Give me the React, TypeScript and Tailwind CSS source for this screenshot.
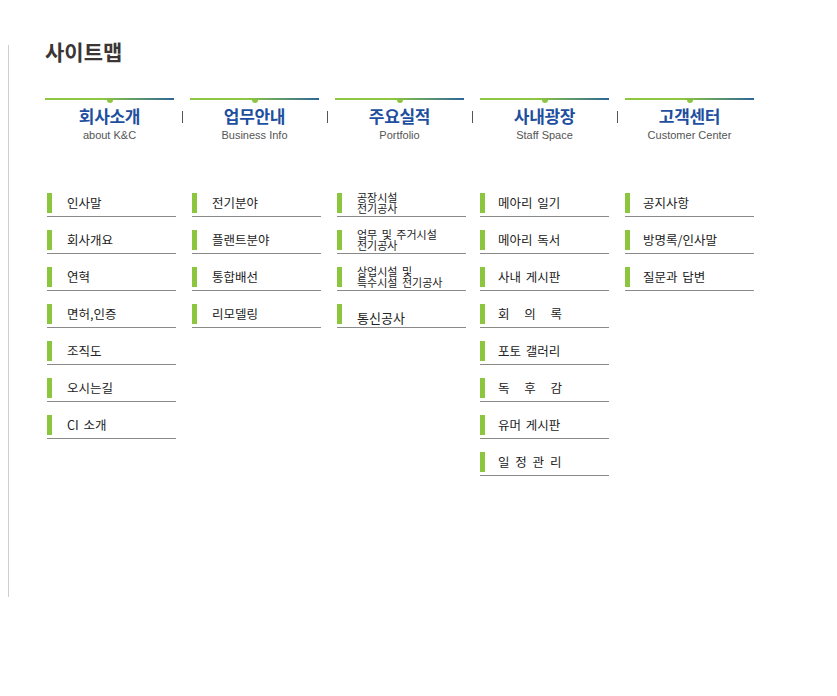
type Item = { label: string; small?: boolean; big?: boolean; spread?: string };

type Section = {
  title: string;
  sub: string;
  shift: boolean; // list sits 2px right of the header bar
  items: Item[];
};

const sections: Section[] = [
  {
    title: "회사소개",
    sub: "about K&C",
    shift: true,
    items: [
      { label: "인사말" },
      { label: "회사개요" },
      { label: "연혁" },
      { label: "면허,인증" },
      { label: "조직도" },
      { label: "오시는길" },
      { label: "CI 소개" },
    ],
  },
  {
    title: "업무안내",
    sub: "Business Info",
    shift: true,
    items: [{ label: "전기분야" }, { label: "플랜트분야" }, { label: "통합배선" }, { label: "리모델링" }],
  },
  {
    title: "주요실적",
    sub: "Portfolio",
    shift: true,
    items: [
      { label: "공장시설\n전기공사", small: true },
      { label: "업무 및 주거시설\n전기공사", small: true },
      { label: "상업시설 및\n특수시설 전기공사", small: true },
      { label: "통신공사", big: true },
    ],
  },
  {
    title: "사내광장",
    sub: "Staff Space",
    shift: false,
    items: [
      { label: "메아리 일기" },
      { label: "메아리 독서" },
      { label: "사내 게시판" },
      { label: "회 의 록", spread: "wide" },
      { label: "포토 갤러리" },
      { label: "독 후 감", spread: "wide" },
      { label: "유머 게시판" },
      { label: "일 정 관 리", spread: "mid" },
    ],
  },
  {
    title: "고객센터",
    sub: "Customer Center",
    shift: false,
    items: [{ label: "공지사항" }, { label: "방명록/인사말" }, { label: "질문과 답변" }],
  },
];

const kr = { fontFamily: '"Noto Sans CJK KR", "Liberation Sans", sans-serif' };

function Header({ s }: { s: Section }) {
  return (
    <div className="w-[129px] flex flex-col items-center">
      <div className="w-full h-[2px] bg-[linear-gradient(to_right,#8dc63f_0%,#8dc63f_45%,#2c6699_100%)]" />
      <div className="w-[6px] h-[3px] rounded-b-full bg-[#8dc63f]" />
      <div className="mt-[2px] text-[17px] leading-[22px] font-bold text-[#1d4f9e] tracking-[-0.3px]" style={kr}>
        {s.title}
      </div>
      <div className="mt-[1px] text-[11px] leading-[14px] text-[#555]" style={{ fontFamily: '"Liberation Sans", Arial, sans-serif' }}>
        {s.sub}
      </div>
    </div>
  );
}

function Row({ item, gap }: { item: Item; gap: string }) {
  const base = "text-[12.5px] leading-[16px] text-[#222] whitespace-pre";
  let textCls = `${base} [word-spacing:2px]`;
  if (item.small) textCls = "text-[11px] leading-[11px] text-[#222] whitespace-pre [word-spacing:2px]";
  if (item.big) textCls = "text-[13px] leading-[16px] text-[#222] whitespace-pre mt-[8px]";
  if (item.spread === "wide") textCls = `${base} [word-spacing:12px]`;
  if (item.spread === "mid") textCls = `${base} [word-spacing:3px]`;

  return (
    <li className="mt-[13px] pb-[3px] border-b border-[#8a8a8a]">
      <div className="h-[20px] flex items-center">
        <span className="w-[5px] h-[20px] bg-[#8cc63f] shrink-0" />
        <span className={`${gap} ${textCls}`} style={kr}>
          {item.label}
        </span>
      </div>
    </li>
  );
}

export default function App() {
  return (
    <div className="w-[837px] h-[696px] bg-white flex">
      <div className="ml-[8px] mt-[45px] w-px h-[552px] bg-[#cfcfcf]" />

      <div className="ml-[36px] pt-[36px] flex flex-col">
        <h1 className="text-[21px] leading-[30px] font-bold text-[#3b3536]" style={kr}>
          사이트맵
        </h1>

        {/* column headers */}
        <div className="mt-[32px] flex">
          {sections.map((s, i) => (
            <div key={s.title} className="flex">
              <Header s={s} />
              {i < sections.length - 1 && (
                <div className="w-[16px] flex justify-center">
                  <div className="mt-[13px] w-px h-[12px] bg-[#555]" />
                </div>
              )}
            </div>
          ))}
        </div>

        {/* link lists */}
        <div className="mt-[38px] flex gap-[16px]">
          {sections.map((s) => (
            <div key={s.title} className="w-[129px]">
              <ul className={s.shift ? "w-[129px] ml-[2px]" : "w-[129px]"}>
                {s.items.map((it) => (
                  <Row key={it.label} item={it} gap={s.shift ? "ml-[15px]" : "ml-[13px]"} />
                ))}
              </ul>
            </div>
          ))}
        </div>
      </div>
    </div>
  );
}
